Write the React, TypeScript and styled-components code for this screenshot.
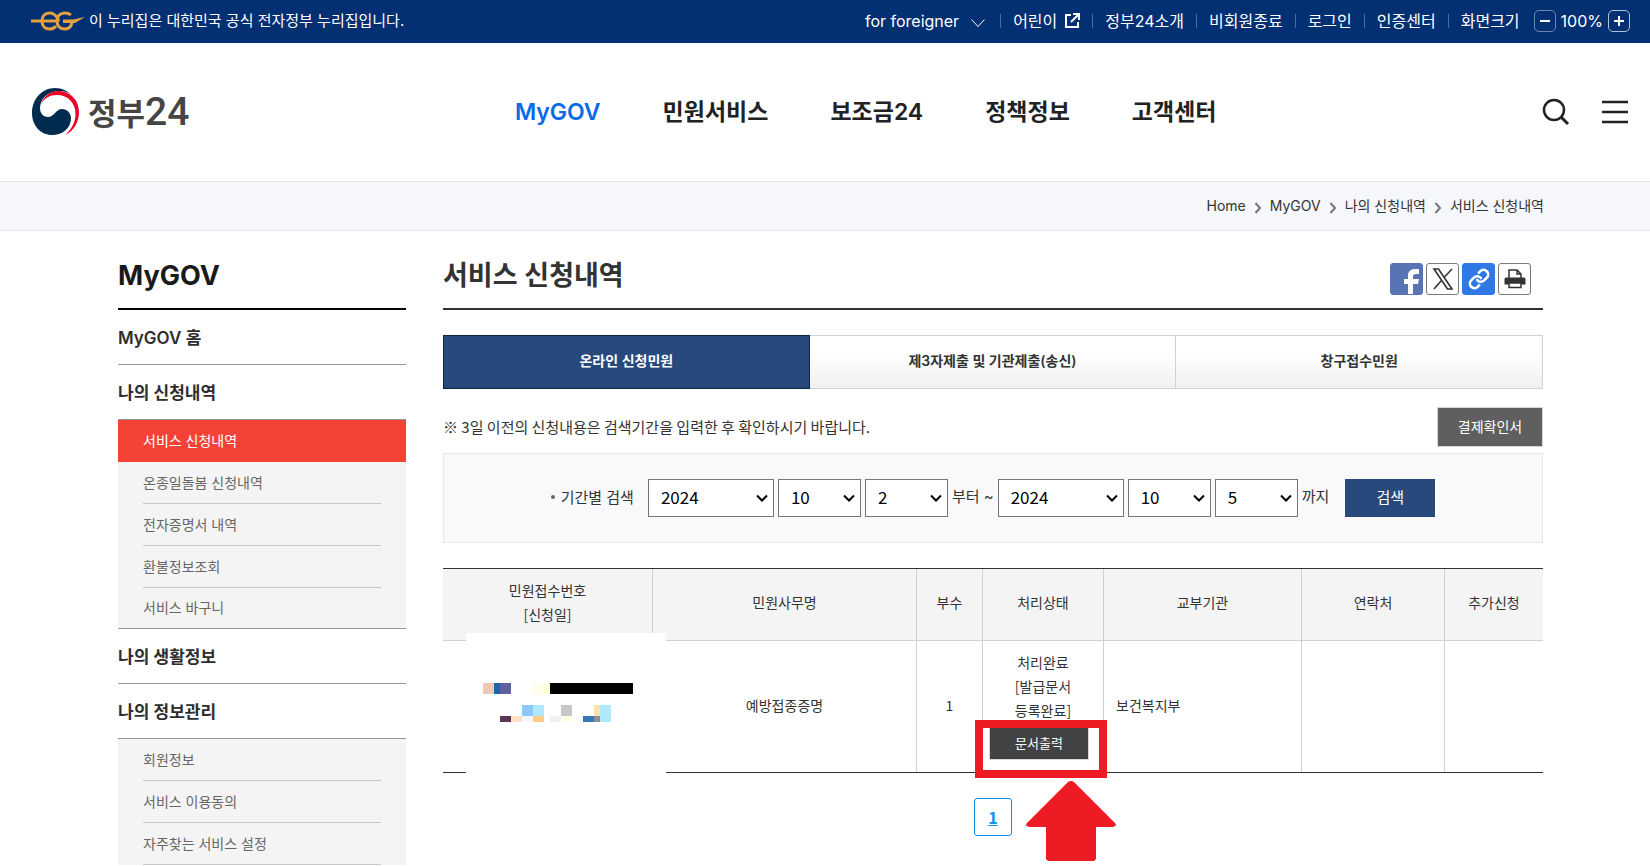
import React from "react";
import styled, { createGlobalStyle, css } from "styled-components";

const GlobalStyle = createGlobalStyle`
  *, *::before, *::after { box-sizing: border-box; }
  html, body { margin: 0; padding: 0; }
  body {
    background: #fff;
    color: #333;
    font-family: Inter, "Noto Sans CJK KR", sans-serif;
    font-size: 14px;
  }
  h1, h2, p, ul, ol { margin: 0; padding: 0; }
  ul, ol { list-style: none; }
  a { color: inherit; text-decoration: none; }
  button, select { font-family: inherit; cursor: pointer; }
  svg { display: block; }
`;

/* ---------- top bar ---------- */

const TopBar = styled.div`
  display: flex;
  align-items: center;
  justify-content: space-between;
  height: 43px;
  padding: 0 20px 2px 31px;
  background: #032f73;
  color: #fff;
`;

const Notice = styled.p`
  display: flex;
  align-items: center;
  gap: 4px;
  font-size: 15px;
  line-height: 24px;
  white-space: nowrap;
`;

const Utilities = styled.ul`
  display: flex;
  align-items: center;
  font-size: 16px;
  line-height: 24px;
  white-space: nowrap;
`;

const Utility = styled.li`
  display: flex;
  align-items: center;

  & + &::before {
    content: "";
    width: 1px;
    height: 14px;
    margin: 0 12px;
    background: #4a6a9c;
  }
`;

const UtilityLink = styled.a`
  display: flex;
  align-items: center;
  gap: 8px;
`;

const LanguageButton = styled.button`
  display: flex;
  align-items: center;
  gap: 12px;
  padding: 0 3px 0 0;
  border: 0;
  background: none;
  color: inherit;
  font-size: 16px;
  line-height: 24px;

  & > svg {
    margin-top: 4px;
  }
`;

const ZoomControl = styled.div`
  display: flex;
  align-items: center;
  gap: 5px;
  margin-left: 14px;
`;

const ZoomButton = styled.button<{ $dim?: boolean }>`
  display: grid;
  place-items: center;
  width: 22px;
  height: 22px;
  padding: 0;
  border: 1px solid ${(p) => (p.$dim ? "#6f87ae" : "#b4c1d6")};
  border-radius: 5px;
  background: none;
  color: #fff;
`;

/* ---------- header ---------- */

const Header = styled.header`
  display: flex;
  align-items: center;
  justify-content: space-between;
  height: 139px;
  padding: 0 22px 0 32px;
  border-bottom: 1px solid #e1e3e8;
`;

const Logo = styled.a`
  display: flex;
  align-items: center;
  gap: 9px;
  color: #454545;
`;

const LogoName = styled.span`
  display: flex;
  align-items: center;
  font-family: "Noto Sans CJK KR", sans-serif;
  font-size: 31px;
  font-weight: 700;
  line-height: 44px;
`;

const LogoNumber = styled.span`
  font-family: Roboto, sans-serif;
  font-size: 39px;
  font-weight: 500;
`;

const MainNav = styled.ul`
  display: flex;
  gap: 62px;
  font-size: 23px;
  font-weight: 600;
  line-height: 32px;
  color: #222;
  white-space: nowrap;
`;

const MainNavLink = styled.a<{ $active?: boolean }>`
  color: ${(p) => (p.$active ? "#0a6ae8" : "inherit")};
`;

const HeaderTools = styled.div`
  display: flex;
  align-items: center;
  gap: 32px;
`;

const IconButton = styled.button`
  display: block;
  padding: 0;
  border: 0;
  background: none;
  color: #222;
`;

/* ---------- breadcrumb ---------- */

const Breadcrumb = styled.nav`
  height: 49px;
  padding: 0 106px;
  border-bottom: 1px solid #e6e8ec;
  background: #f5f7fb;
`;

const Crumbs = styled.ol`
  display: flex;
  align-items: center;
  justify-content: flex-end;
  gap: 8px;
  height: 48px;
  color: #333;
`;

const Crumb = styled.li`
  display: flex;
  align-items: center;
  gap: 8px;
  line-height: 24px;

  & > svg {
    margin-top: 3px;
  }
`;

/* ---------- page frame ---------- */

const Page = styled.div`
  display: grid;
  grid-template-columns: 288px minmax(0, 1fr);
  column-gap: 37px;
  padding: 0 107px 0 118px;
`;

/* ---------- side menu ---------- */

const SideTitle = styled.h2`
  height: 79px;
  padding-top: 25px;
  border-bottom: 2px solid #000;
  color: #1a1a1a;
  font-size: 27px;
  font-weight: 700;
  line-height: 40px;
`;

const GroupLink = styled.a`
  display: flex;
  align-items: center;
  height: 55px;
  padding-bottom: 1px;
  border-bottom: 1px solid #959595;
  color: #2e2e2e;
  font-size: 17px;
  font-weight: 600;
`;

const SubMenu = styled.ul<{ $closed?: boolean }>`
  background: #f4f4f4;

  ${(p) =>
    p.$closed &&
    css`
      border-bottom: 1px solid #959595;

      & > li:last-child a {
        height: 40px;
        border-bottom: 0;
      }
    `}
`;

const SubItem = styled.li<{ $active?: boolean }>`
  padding: 0 25px;
  ${(p) =>
    p.$active &&
    css`
      background: #f44336;
      color: #fff;
    `}
`;

const SubLink = styled.a<{ $active?: boolean }>`
  display: flex;
  align-items: center;
  height: 42px;
  padding-bottom: 2px;
  border-bottom: 1px solid ${(p) => (p.$active ? "#f44336" : "#c8c8c8")};
  color: ${(p) => (p.$active ? "#fff" : "#666")};
  font-size: 14px;
`;

/* ---------- main column ---------- */

const TitleRow = styled.div`
  display: flex;
  align-items: flex-start;
  justify-content: space-between;
  height: 79px;
  padding: 25px 12px 0 0;
  border-bottom: 2px solid #333;
`;

const Title = styled.h1`
  color: #333;
  font-size: 27px;
  font-weight: 600;
  line-height: 40px;
`;

const ShareList = styled.ul`
  display: flex;
  gap: 3px;
  padding-top: 7px;
`;

const ShareButton = styled.button<{ $fill?: string }>`
  display: grid;
  place-items: center;
  width: 33px;
  height: 32px;
  padding: 0;
  border: 1px solid ${(p) => p.$fill ?? "#7a7a7a"};
  border-radius: 3px;
  background: ${(p) => p.$fill ?? "#fff"};
  color: #333;
  overflow: hidden;
`;

const Tabs = styled.div`
  display: grid;
  grid-template-columns: repeat(3, 1fr);
  margin-top: 25px;
`;

const Tab = styled.button<{ $active?: boolean }>`
  height: 54px;
  padding: 0 0 4px;
  border: 1px solid #d2d2d2;
  border-left-width: 0;
  background: linear-gradient(#fff 30%, #f0f0f0);
  color: #333;
  font-size: 14px;
  font-weight: 600;

  ${(p) =>
    p.$active &&
    css`
      border: 1px solid #0d2747;
      background: #28497c;
      color: #fff;
    `}
`;

const NoteRow = styled.div`
  display: flex;
  align-items: center;
  justify-content: space-between;
  margin-top: 18px;
`;

const Note = styled.p`
  font-family: "Noto Sans CJK KR", sans-serif;
  font-size: 15px;
  line-height: 24px;
`;

const ReceiptButton = styled.button`
  width: 106px;
  height: 40px;
  padding: 0 0 2px;
  border: 1px solid #d6d6d6;
  background: #5f5f5f;
  color: #fff;
  font-size: 14px;
`;

const SearchForm = styled.form`
  display: flex;
  align-items: center;
  justify-content: center;
  gap: 4px;
  height: 90px;
  margin-top: 6px;
  padding-bottom: 1px;
  border: 1px solid #e6e7ed;
  background: #f9f9fb;
  font-size: 15px;
  white-space: nowrap;
`;

const PeriodLabel = styled.span`
  display: flex;
  align-items: center;
  gap: 6px;
  margin-right: 10px;
  padding-bottom: 2px;

  &::before {
    content: "";
    width: 4px;
    height: 4px;
    border-radius: 50%;
    background: #666;
  }
`;

const RangeWord = styled.span`
  padding-bottom: 4px;
`;

const SelectBox = styled.span<{ $wide?: boolean }>`
  display: grid;
  align-items: center;
  width: ${(p) => (p.$wide ? 126 : 83)}px;

  & > * {
    grid-area: 1 / 1;
  }

  & > svg {
    justify-self: end;
    margin-right: 6px;
    pointer-events: none;
  }
`;

const Select = styled.select`
  appearance: none;
  width: 100%;
  height: 38px;
  padding: 0 12px 2px;
  border: 1px solid #767676;
  border-radius: 0;
  background: #fff;
  color: #000;
  font-family: "Noto Sans CJK KR", sans-serif;
  font-size: 17px;
`;

const SearchButton = styled.button`
  width: 90px;
  height: 38px;
  margin-left: 12px;
  padding: 0 0 2px;
  border: 0;
  background: #28497c;
  color: #fff;
  font-size: 15px;
`;

/* ---------- results ---------- */

const Results = styled.table`
  width: 100%;
  margin-top: 25px;
  border-collapse: separate;
  border-spacing: 0;
  border-top: 1px solid #333;
  border-bottom: 1px solid #333;
  table-layout: fixed;
  font-family: "Noto Sans CJK KR", sans-serif;
  font-size: 14px;
  line-height: 24px;
`;

const Col = styled.col<{ $share: number }>`
  width: ${(p) => p.$share}%;
`;

const HeadCell = styled.th`
  height: 72px;
  padding: 0 0 6px;
  border-bottom: 1px solid #d0d0d0;
  background: #f4f4f4;
  font-weight: 400;

  & + & {
    border-left: 1px solid #d0d0d0;
  }
`;

const Cell = styled.td<{ $start?: boolean; $plain?: boolean }>`
  position: relative;
  height: 131px;
  padding: 0 12px 4px;
  border-left: ${(p) => (p.$plain ? "0" : "1px solid #d0d0d0")};
  text-align: ${(p) => (p.$start ? "left" : "center")};
`;

const Redaction = styled.div`
  position: absolute;
  top: -8px;
  left: 23px;
  z-index: 1;
  width: 200px;
  height: 142px;
  background: #fff;
`;

const PrintButton = styled.button`
  display: block;
  width: 100px;
  height: 33px;
  margin: 5px 0 0;
  padding: 0 0 2px;
  border: 1px solid #d9d9d9;
  background: #424242;
  color: #fff;
  font-size: 13px;
`;

const StatusBox = styled.div`
  margin: 0 -6px;
`;

const Highlight = styled.div`
  position: absolute;
  top: 79px;
  left: -8px;
  z-index: 2;
  width: 132px;
  height: 58px;
  border: 8px solid #ed1c24;
  pointer-events: none;
`;

const Arrow = styled.svg`
  position: absolute;
  top: 140px;
  left: 43px;
  z-index: 2;
  pointer-events: none;
`;

const Pagination = styled.nav`
  display: flex;
  justify-content: center;
  margin-top: 25px;
`;

const PageLink = styled.a`
  display: grid;
  place-items: center;
  width: 38px;
  height: 38px;
  border: 1px solid #0a93e8;
  border-radius: 3px;
  color: #0a93e8;
  font-family: "Noto Sans CJK KR", sans-serif;
  font-size: 16px;
  font-weight: 700;
  text-decoration: underline;
`;

/* ---------- drawings ---------- */

const EgMark = () => (
  <svg width="54" height="20" viewBox="0 0 54 20" fill="none" stroke="#e3a13c" aria-hidden="true">
    <path d="M0 10h25" strokeWidth="3" />
    <path d="M11 10c0-5 3-8 7.500-8 4 0 6 2 8 5s0 3-2 3" strokeWidth="3" />
    <path d="M11 10c0 5 3 8 7.500 8 4 0 6-2 8-5 2-4 4-6 6-6" strokeWidth="3" strokeOpacity="0" />
    <path d="M11 10c0 5 3 8 7.500 8 3 0 5-1 6.500-3" strokeWidth="3" />
    <path d="M40 4c-2-1.500-3.500-2-6-2-5 0-8 3-8 8s3 8 8 8c4 0 6.500-3 7-7" strokeWidth="3" />
    <path d="M32 8.500h10l12-2.500-10 6H32z" fill="#e3a13c" stroke="none" />
  </svg>
);

const Taegeuk = () => (
  <svg width="47" height="48" viewBox="0 0 47 48" aria-hidden="true">
    <path
      d="M41 9C36 3 30 0 23 0 10 0 0 11 0 25c0 13 9 22 20 22 11 0 19-7 19-17 0-5-4-9-9-9-6 0-8 8-14 8-5 0-8-4-8-9C8 10 17 3 27 3c6 0 11 2 14 6z"
      fill="#002c50"
    />
    <path
      d="M8.500 17C12 8 18 3 26 3c12 0 21 9 21 21 0 10-5 19-14 23 7-6 10.500-13 10.500-21C43.500 15 36 7 25 7 18 7 12 10 8.500 17z"
      fill="#ea0029"
    />
  </svg>
);

const ChevronDown = () => (
  <svg width="14" height="8" viewBox="0 0 14 8" fill="none" stroke="currentColor" strokeWidth="1" aria-hidden="true">
    <path d="M.5.5 7 7.500 13.500.5" />
  </svg>
);

const ExternalIcon = () => (
  <svg width="15" height="15" viewBox="0 0 15 15" fill="none" stroke="currentColor" strokeWidth="2" aria-hidden="true">
    <path d="M6 2H1v12h12V9M8 1h6v6M14 1 6 9" />
  </svg>
);

const SearchIcon = () => (
  <svg width="28" height="28" viewBox="0 0 28 28" fill="none" stroke="currentColor" strokeWidth="2.500" aria-hidden="true">
    <circle cx="12" cy="12" r="10" />
    <path d="m19 19 7 7" strokeWidth="3" />
  </svg>
);

const MenuIcon = () => (
  <svg width="26" height="24" viewBox="0 0 26 24" fill="none" stroke="currentColor" strokeWidth="2.500" aria-hidden="true">
    <path d="M0 2h26M0 12h26M0 22h26" />
  </svg>
);

const CrumbArrow = () => (
  <svg width="8" height="12" viewBox="0 0 8 12" fill="none" stroke="#777" strokeWidth="2" aria-hidden="true">
    <path d="m1.500 1 4.500 5-4.500 5" />
  </svg>
);

const SelectArrow = () => (
  <svg width="12" height="8" viewBox="0 0 12 8" fill="none" stroke="#000" strokeWidth="2" aria-hidden="true">
    <path d="m1 1.500 5 5 5-5" />
  </svg>
);

const FacebookIcon = () => (
  <svg width="33" height="32" viewBox="0 0 33 32" fill="#fff" aria-hidden="true">
    <path d="M17 32V20h-4v-5h4v-3c0-5 3-7 7-7h4v5h-3c-2 0-3 1-3 2v3h6l-1 5h-5v12z" />
  </svg>
);

const XIcon = () => (
  <svg width="22" height="22" viewBox="0 0 22 22" fill="none" stroke="currentColor" strokeWidth="1.600" aria-hidden="true">
    <path d="M2 1h4.500L20 21h-4.500zM20 1l-8.500 9M9.500 12.500 2 21" />
  </svg>
);

const LinkIcon = () => (
  <svg width="22" height="22" viewBox="0 0 24 24" fill="none" stroke="#fff" strokeWidth="2.800" strokeLinecap="round" aria-hidden="true">
    <path d="M10 13a5 5 0 0 0 7.540.54l3-3a5 5 0 0 0-7.070-7.070l-1.720 1.710" />
    <path d="M14 11a5 5 0 0 0-7.540-.54l-3 3a5 5 0 0 0 7.070 7.070l1.710-1.710" />
  </svg>
);

const PrintIcon = () => (
  <svg width="22" height="20" viewBox="0 0 22 20" fill="none" stroke="currentColor" strokeWidth="1.500" aria-hidden="true">
    <path d="M5 9V1h8l4 4v4M13 1v4h4" />
    <path d="M2 8.500h18a1.500 1.500 0 0 1 1.500 1.500v5.500h-21V10A1.500 1.500 0 0 1 2 8.500z" fill="currentColor" stroke="none" />
    <path d="M5 14h12v4.500H5z" fill="#fff" />
  </svg>
);

const mosaic: [number, number, number, number, string][] = [
  [17, 50, 11, 11, "#efc9b3"],
  [28, 50, 6, 11, "#2264a8"],
  [34, 50, 11, 11, "#62609c"],
  [67, 50, 11, 11, "#ffffea"],
  [78, 50, 6, 11, "#ffffdc"],
  [84, 50, 83, 11, "#000"],
  [56, 72, 11, 11, "#88c8fb"],
  [67, 72, 11, 11, "#b0e9ff"],
  [95, 72, 11, 11, "#c8c8c8"],
  [128, 72, 6, 11, "#ffe3a8"],
  [134, 72, 11, 17, "#b0e9ff"],
  [34, 83, 11, 6, "#5a3556"],
  [45, 83, 11, 6, "#ffdfc8"],
  [56, 83, 11, 6, "#f5f7ff"],
  [67, 83, 11, 6, "#ffcc88"],
  [84, 83, 11, 6, "#f0f0f5"],
  [95, 83, 11, 6, "#ffffea"],
  [117, 83, 11, 6, "#3878b8"],
  [128, 83, 6, 6, "#909090"],
];

const Mosaic = () => (
  <svg width="200" height="142" shapeRendering="crispEdges" aria-hidden="true">
    {mosaic.map(([x, y, w, h, fill]) => (
      <rect key={`${x}-${y}`} x={x} y={y} width={w} height={h} fill={fill} />
    ))}
  </svg>
);

/* ---------- data ---------- */

const utilities = ["정부24소개", "비회원종료", "로그인", "인증센터"];
const mainMenu = ["MyGOV", "민원서비스", "보조금24", "정책정보", "고객센터"];
const crumbs = ["Home", "MyGOV", "나의 신청내역", "서비스 신청내역"];
const applications = ["서비스 신청내역", "온종일돌봄 신청내역", "전자증명서 내역", "환불정보조회", "서비스 바구니"];
const profile = ["회원정보", "서비스 이용동의", "자주찾는 서비스 설정"];
const tabs = ["온라인 신청민원", "제3자제출 및 기관제출(송신)", "창구접수민원"];
const columnShares = [19, 24, 6, 11, 18, 13, 9];
const headings = ["민원사무명", "부수", "처리상태", "교부기관", "연락처", "추가신청"];

const range = (from: number, to: number) =>
  Array.from({ length: to - from + 1 }, (_, i) => String(from + i));

const years = range(2020, 2024);
const months = range(1, 12);
const days = range(1, 31);

type DateSelectProps = { label: string; value: string; options: string[]; wide?: boolean };

const DateSelect = ({ label, value, options, wide }: DateSelectProps) => (
  <SelectBox $wide={wide}>
    <Select aria-label={label} defaultValue={value}>
      {options.map((o) => (
        <option key={o}>{o}</option>
      ))}
    </Select>
    <SelectArrow />
  </SelectBox>
);

export default function App() {
  return (
    <>
      <GlobalStyle />
      <TopBar>
        <Notice>
          <EgMark />이 누리집은 대한민국 공식 전자정부 누리집입니다.
        </Notice>
        <Utilities>
          <Utility>
            <LanguageButton type="button">
              for foreigner
              <ChevronDown />
            </LanguageButton>
          </Utility>
          <Utility>
            <UtilityLink href="#kids">
              어린이
              <ExternalIcon />
            </UtilityLink>
          </Utility>
          {utilities.map((name) => (
            <Utility key={name}>
              <UtilityLink href="#menu">{name}</UtilityLink>
            </Utility>
          ))}
          <Utility>
            화면크기
            <ZoomControl>
              <ZoomButton type="button" aria-label="축소" $dim>
                <svg width="10" height="10" stroke="currentColor" strokeWidth="2" aria-hidden="true">
                  <path d="M0 5h10" />
                </svg>
              </ZoomButton>
              100%
              <ZoomButton type="button" aria-label="확대">
                <svg width="10" height="10" stroke="currentColor" strokeWidth="2" aria-hidden="true">
                  <path d="M0 5h10M5 0v10" />
                </svg>
              </ZoomButton>
            </ZoomControl>
          </Utility>
        </Utilities>
      </TopBar>

      <Header>
        <Logo href="#home">
          <Taegeuk />
          <LogoName>
            정부<LogoNumber>24</LogoNumber>
          </LogoName>
        </Logo>
        <nav>
          <MainNav>
            {mainMenu.map((name, i) => (
              <li key={name}>
                <MainNavLink href="#menu" $active={i === 0}>
                  {name}
                </MainNavLink>
              </li>
            ))}
          </MainNav>
        </nav>
        <HeaderTools>
          <IconButton type="button" aria-label="검색">
            <SearchIcon />
          </IconButton>
          <IconButton type="button" aria-label="전체메뉴">
            <MenuIcon />
          </IconButton>
        </HeaderTools>
      </Header>

      <Breadcrumb>
        <Crumbs>
          {crumbs.map((name, i) => (
            <Crumb key={name}>
              {i > 0 && <CrumbArrow />}
              <a href="#crumb">{name}</a>
            </Crumb>
          ))}
        </Crumbs>
      </Breadcrumb>

      <Page>
        <aside>
          <SideTitle>MyGOV</SideTitle>
          <GroupLink href="#home">MyGOV 홈</GroupLink>
          <GroupLink href="#applications">나의 신청내역</GroupLink>
          <SubMenu $closed>
            {applications.map((name, i) => (
              <SubItem key={name} $active={i === 0}>
                <SubLink href="#item" $active={i === 0}>
                  {name}
                </SubLink>
              </SubItem>
            ))}
          </SubMenu>
          <GroupLink href="#life">나의 생활정보</GroupLink>
          <GroupLink href="#profile">나의 정보관리</GroupLink>
          <SubMenu>
            {profile.map((name) => (
              <SubItem key={name}>
                <SubLink href="#item">{name}</SubLink>
              </SubItem>
            ))}
          </SubMenu>
        </aside>

        <main>
          <TitleRow>
            <Title>서비스 신청내역</Title>
            <ShareList>
              <li>
                <ShareButton type="button" aria-label="페이스북 공유" $fill="#5874b5">
                  <FacebookIcon />
                </ShareButton>
              </li>
              <li>
                <ShareButton type="button" aria-label="X 공유">
                  <XIcon />
                </ShareButton>
              </li>
              <li>
                <ShareButton type="button" aria-label="주소 복사" $fill="#2f78e6">
                  <LinkIcon />
                </ShareButton>
              </li>
              <li>
                <ShareButton type="button" aria-label="인쇄">
                  <PrintIcon />
                </ShareButton>
              </li>
            </ShareList>
          </TitleRow>

          <Tabs role="tablist">
            {tabs.map((name, i) => (
              <Tab key={name} type="button" role="tab" aria-selected={i === 0} $active={i === 0}>
                {name}
              </Tab>
            ))}
          </Tabs>

          <NoteRow>
            <Note>※ 3일 이전의 신청내용은 검색기간을 입력한 후 확인하시기 바랍니다.</Note>
            <ReceiptButton type="button">결제확인서</ReceiptButton>
          </NoteRow>

          <SearchForm>
            <PeriodLabel>기간별 검색</PeriodLabel>
            <DateSelect label="시작 연도" value="2024" options={years} wide />
            <DateSelect label="시작 월" value="10" options={months} />
            <DateSelect label="시작 일" value="2" options={days} />
            <RangeWord>부터 ~</RangeWord>
            <DateSelect label="종료 연도" value="2024" options={years} wide />
            <DateSelect label="종료 월" value="10" options={months} />
            <DateSelect label="종료 일" value="5" options={days} />
            <RangeWord>까지</RangeWord>
            <SearchButton type="button">검색</SearchButton>
          </SearchForm>

          <Results>
            <colgroup>
              {columnShares.map((share, i) => (
                <Col key={i} $share={share} />
              ))}
            </colgroup>
            <thead>
              <tr>
                <HeadCell scope="col">
                  민원접수번호
                  <br />
                  [신청일]
                </HeadCell>
                {headings.map((name) => (
                  <HeadCell key={name} scope="col">
                    {name}
                  </HeadCell>
                ))}
              </tr>
            </thead>
            <tbody>
              <tr>
                <Cell $plain>
                  <Redaction>
                    <Mosaic />
                  </Redaction>
                </Cell>
                <Cell>예방접종증명</Cell>
                <Cell>1</Cell>
                <Cell>
                  <StatusBox>
                    처리완료
                    <br />
                    [발급문서
                    <br />
                    등록완료]
                    <PrintButton type="button">문서출력</PrintButton>
                  </StatusBox>
                  <Highlight />
                  <Arrow width="90" height="80" viewBox="0 0 90 80" fill="#ed1c24" aria-hidden="true">
                    <path d="M42 1q3-2 6 0l41 41q2 2 0 3l-2 1H70v32l-2 2H22l-2-2V46H3l-2-1q-2-1 0-3z" />
                  </Arrow>
                </Cell>
                <Cell $start>보건복지부</Cell>
                <Cell />
                <Cell />
              </tr>
            </tbody>
          </Results>

          <Pagination aria-label="페이지">
            <PageLink href="#page-1" aria-current="page">
              1
            </PageLink>
          </Pagination>
        </main>
      </Page>
    </>
  );
}
